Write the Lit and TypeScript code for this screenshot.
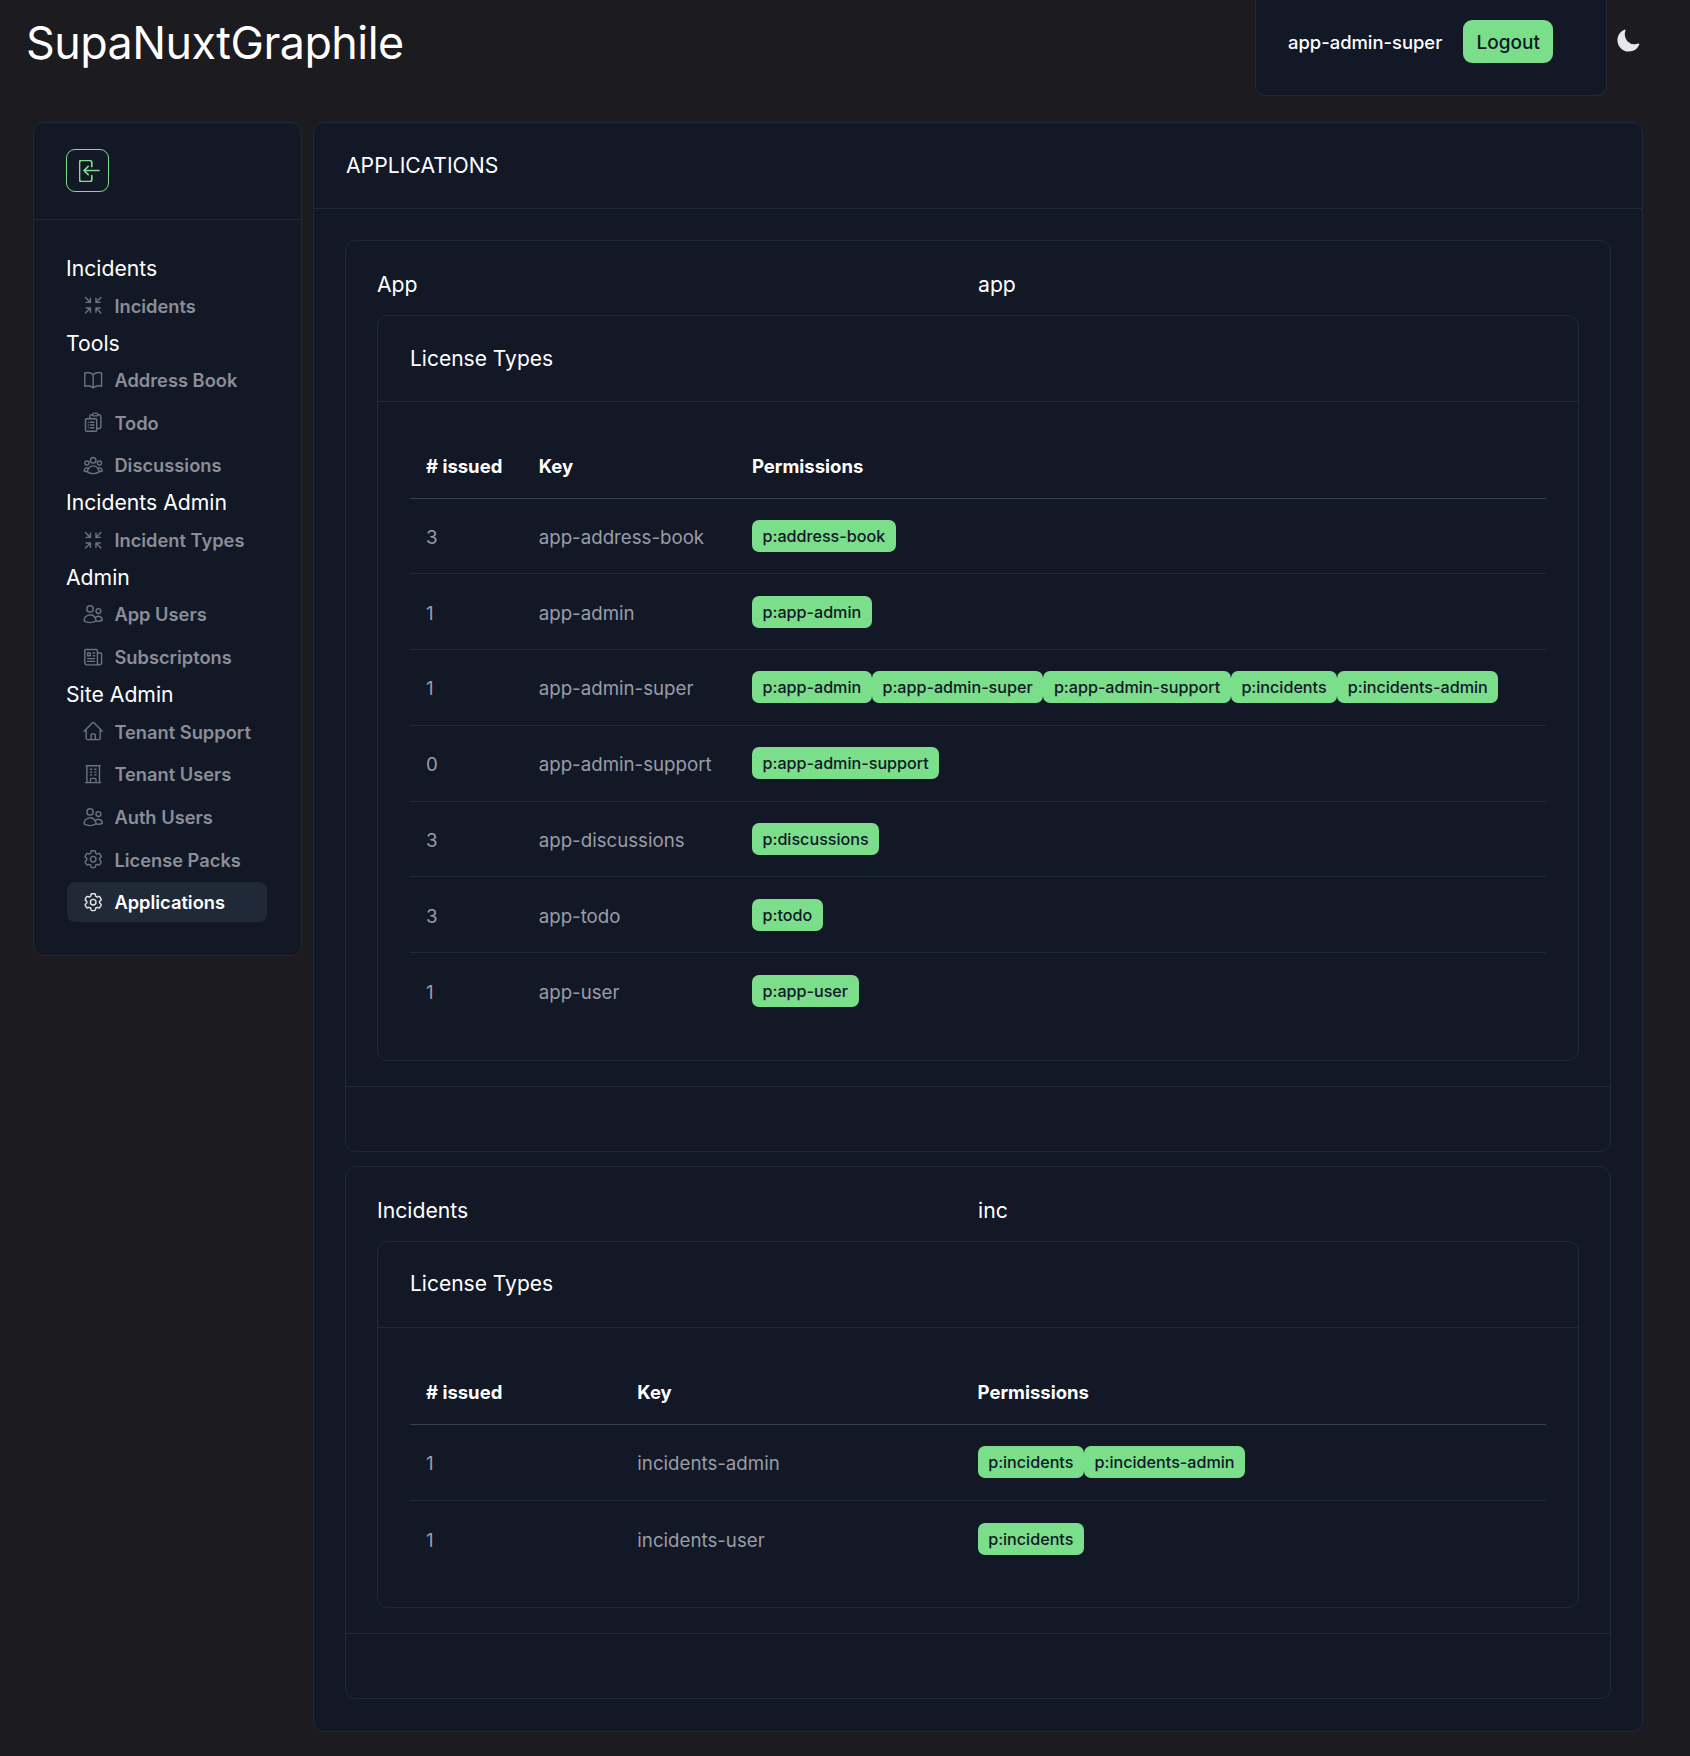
import { LitElement, css, html, svg } from 'lit';
import { customElement } from 'lit/decorators.js';

const ICONS: Record<string, string> = {
  in: 'M9 9V4.5M9 9H4.5M9 9 3.75 3.75M9 15v4.5M9 15H4.5M9 15l-5.25 5.25M15 9h4.5M15 9V4.5M15 9l5.25-5.25M15 15h4.5M15 15v4.5m0-4.5 5.25 5.25',
  book: 'M12 6.042A8.967 8.967 0 0 0 6 3.75c-1.052 0-2.062.18-3 .512v14.25A8.987 8.987 0 0 1 6 18c2.305 0 4.408.867 6 2.292m0-14.25a8.966 8.966 0 0 1 6-2.292c1.052 0 2.062.18 3 .512v14.25A8.987 8.987 0 0 0 18 18a8.967 8.967 0 0 0-6 2.292m0-14.25v14.25',
  clipboard: 'M9 12h3.75M9 15h3.75M9 18h3.75m3 .75H18a2.25 2.25 0 0 0 2.25-2.25V6.108c0-1.135-.845-2.098-1.976-2.192a48.424 48.424 0 0 0-1.123-.08m-5.801 0c-.065.21-.1.433-.1.664 0 .414.336.75.75.75h4.5a.75.75 0 0 0 .75-.75 2.25 2.25 0 0 0-.1-.664m-5.8 0A2.251 2.251 0 0 1 13.5 2.25H15c1.012 0 1.867.668 2.15 1.586m-5.8 0c-.376.023-.75.05-1.124.08C9.095 4.01 8.25 4.973 8.25 6.108V8.25m0 0H4.875c-.621 0-1.125.504-1.125 1.125v11.25c0 .621.504 1.125 1.125 1.125h9.75c.621 0 1.125-.504 1.125-1.125V9.375c0-.621-.504-1.125-1.125-1.125H8.25ZM6.75 12h.008v.008H6.75V12Zm0 3h.008v.008H6.75V15Zm0 3h.008v.008H6.75V18Z',
  group: 'M18 18.72a9.094 9.094 0 0 0 3.741-.479 3 3 0 0 0-4.682-2.72m.94 3.198.001.031c0 .225-.012.447-.037.666A11.944 11.944 0 0 1 12 21c-2.17 0-4.207-.576-5.963-1.584A6.062 6.062 0 0 1 6 18.719m12 0a5.971 5.971 0 0 0-.941-3.197m0 0A5.995 5.995 0 0 0 12 12.75a5.995 5.995 0 0 0-5.058 2.772m0 0a3 3 0 0 0-4.681 2.72 8.986 8.986 0 0 0 3.74.477m.94-3.197a5.971 5.971 0 0 0-.94 3.197M15 6.75a3 3 0 1 1-6 0 3 3 0 0 1 6 0Zm6 3a2.25 2.25 0 1 1-4.5 0 2.25 2.25 0 0 1 4.5 0Zm-13.5 0a2.25 2.25 0 1 1-4.5 0 2.25 2.25 0 0 1 4.5 0Z',
  users: 'M15 19.128a9.38 9.38 0 0 0 2.625.372 9.337 9.337 0 0 0 4.121-.952 4.125 4.125 0 0 0-7.533-2.493M15 19.128v-.003c0-1.113-.285-2.16-.786-3.07M15 19.128v.106A12.318 12.318 0 0 1 8.624 21c-2.331 0-4.512-.645-6.374-1.766l-.001-.109a6.375 6.375 0 0 1 11.964-3.07M12 6.375a3.375 3.375 0 1 1-6.75 0 3.375 3.375 0 0 1 6.75 0Zm8.25 2.25a2.625 2.625 0 1 1-5.25 0 2.625 2.625 0 0 1 5.25 0Z',
  news: 'M12 7.5h1.5m-1.5 3h1.5m-7.5 3h7.5m-7.5 3h7.5m3-9h3.375c.621 0 1.125.504 1.125 1.125V18a2.25 2.25 0 0 1-2.25 2.25M16.5 7.5V18a2.25 2.25 0 0 0 2.25 2.25M16.5 7.5V4.875c0-.621-.504-1.125-1.125-1.125H4.125C3.504 3.75 3 4.254 3 4.875V18a2.25 2.25 0 0 0 2.25 2.25h13.5M6 7.5h3v3H6v-3Z',
  home: 'm2.25 12 8.954-8.955c.44-.439 1.152-.439 1.591 0L21.75 12M4.5 9.75v10.125c0 .621.504 1.125 1.125 1.125H9.75v-4.875c0-.621.504-1.125 1.125-1.125h2.25c.621 0 1.125.504 1.125 1.125V21h4.125c.621 0 1.125-.504 1.125-1.125V9.75M8.25 21h8.25',
  office: 'M3.75 21h16.5M4.5 3h15M5.25 3v18m13.5-18v18M9 6.75h1.5m-1.5 3h1.5m-1.5 3h1.5m3-6H15m-1.5 3H15m-1.5 3H15M9 21v-3.375c0-.621.504-1.125 1.125-1.125h3.75c.621 0 1.125.504 1.125 1.125V21',
  cog: 'M9.594 3.94c.09-.542.56-.94 1.11-.94h2.593c.55 0 1.02.398 1.11.94l.213 1.281c.063.374.313.686.645.87.074.04.147.083.22.127.325.196.72.257 1.075.124l1.217-.456a1.125 1.125 0 0 1 1.37.49l1.296 2.247a1.125 1.125 0 0 1-.26 1.431l-1.003.827c-.293.241-.438.613-.43.992a7.723 7.723 0 0 1 0 .255c-.008.378.137.75.43.991l1.004.827c.424.35.534.955.26 1.43l-1.298 2.247a1.125 1.125 0 0 1-1.369.491l-1.217-.456c-.355-.133-.75-.072-1.076.124a6.47 6.47 0 0 1-.22.128c-.331.183-.581.495-.644.869l-.213 1.281c-.09.543-.56.94-1.11.94h-2.594c-.55 0-1.019-.398-1.11-.94l-.213-1.281c-.062-.374-.312-.686-.644-.87a6.52 6.52 0 0 1-.22-.127c-.325-.196-.72-.257-1.076-.124l-1.217.456a1.125 1.125 0 0 1-1.369-.49l-1.297-2.247a1.125 1.125 0 0 1 .26-1.431l1.004-.827c.292-.24.437-.613.43-.991a6.932 6.932 0 0 1 0-.255c.007-.38-.138-.751-.43-.992l-1.004-.827a1.125 1.125 0 0 1-.26-1.43l1.297-2.247a1.125 1.125 0 0 1 1.37-.491l1.216.456c.356.133.751.072 1.076-.124.072-.044.146-.086.22-.128.332-.183.582-.495.644-.869l.214-1.28ZM15 12a3 3 0 1 1-6 0 3 3 0 0 1 6 0Z',
};

const NAV = [
  { title: 'Incidents', items: [['Incidents', 'in']] },
  { title: 'Tools', items: [['Address Book', 'book'], ['Todo', 'clipboard'], ['Discussions', 'group']] },
  { title: 'Incidents Admin', items: [['Incident Types', 'in']] },
  { title: 'Admin', items: [['App Users', 'users'], ['Subscriptons', 'news']] },
  {
    title: 'Site Admin',
    items: [['Tenant Support', 'home'], ['Tenant Users', 'office'], ['Auth Users', 'users'], ['License Packs', 'cog'], ['Applications', 'cog']],
  },
];

const APPS = [
  {
    name: 'App',
    key: 'app',
    rows: [
      [3, 'app-address-book', ['p:address-book']],
      [1, 'app-admin', ['p:app-admin']],
      [1, 'app-admin-super', ['p:app-admin', 'p:app-admin-super', 'p:app-admin-support', 'p:incidents', 'p:incidents-admin']],
      [0, 'app-admin-support', ['p:app-admin-support']],
      [3, 'app-discussions', ['p:discussions']],
      [3, 'app-todo', ['p:todo']],
      [1, 'app-user', ['p:app-user']],
    ],
  },
  {
    name: 'Incidents',
    key: 'inc',
    rows: [
      [1, 'incidents-admin', ['p:incidents', 'p:incidents-admin']],
      [1, 'incidents-user', ['p:incidents']],
    ],
  },
];

const icon = (name: string) => html`
  <svg class="icon" viewBox="0 0 24 24" fill="none" stroke="currentColor" stroke-width="1.5" stroke-linecap="round" stroke-linejoin="round">
    ${svg`<path d=${ICONS[name]}></path>`}
  </svg>
`;

@customElement('app-root')
export class AppRoot extends LitElement {

  renderNav () {
    return NAV.map((group) => html`
      <div class="nav-group">
        <div class="nav-title">${group.title}</div>
        <ul>
          ${group.items.map(([label, name]) => html`
            <li class=${label === 'Applications' ? 'active' : ''}>${icon(name)}<span>${label}</span></li>
          `)}
        </ul>
      </div>
    `);
  }

  renderApp (app: any) {
    return html`
      <section class="card">
        <div class="card-body">
          <div class="app-title"><span>${app.name}</span><span>${app.key}</span></div>
          <div class="card inner">
            <div class="card-head">License Types</div>
            <div class="table-wrap">
              <table>
                <thead>
                  <tr><th># issued</th><th>Key</th><th>Permissions</th></tr>
                </thead>
                <tbody>
                  ${app.rows.map((row: any) => html`
                    <tr>
                      <td>${row[0]}</td>
                      <td>${row[1]}</td>
                      <td><div class="chips">${row[2].map((p: string) => html`<span class="chip">${p}</span>`)}</div></td>
                    </tr>
                  `)}
                </tbody>
              </table>
            </div>
          </div>
        </div>
        <div class="card-foot"></div>
      </section>
    `;
  }

  render () {
    return html`
      <header>
        <h1>SupaNuxtGraphile</h1>
        <div class="user">
          <span>app-admin-super</span>
          <button>Logout</button>
        </div>
        <svg class="moon" viewBox="0 0 24 24" fill="currentColor">
          <path fill-rule="evenodd" clip-rule="evenodd" d="M9.528 1.718a.75.75 0 0 1 .162.819A8.97 8.97 0 0 0 9 6a9 9 0 0 0 9 9 8.97 8.97 0 0 0 3.463-.69.75.75 0 0 1 .981.98 10.503 10.503 0 0 1-9.694 6.46c-5.799 0-10.5-4.701-10.5-10.5 0-4.368 2.667-8.112 6.46-9.694a.75.75 0 0 1 .818.162Z"></path>
        </svg>
      </header>
      <div class="layout">
        <aside class="card">
          <div class="side-head">
            <div class="logo">
              <svg viewBox="0 0 21 22" fill="none" stroke="currentColor" stroke-width="1.7" stroke-linecap="round" stroke-linejoin="round">
                <path d="M12.8 6.5V2.5a2 2 0 0 0-2-2H2.5a2 2 0 0 0-2 2v17a2 2 0 0 0 2 2h8.3a2 2 0 0 0 2-2v-4"></path>
                <path d="M20 10.5H5M9.2 6.3 5 10.5l4.2 4.2"></path>
              </svg>
            </div>
          </div>
          <nav>${this.renderNav()}</nav>
        </aside>
        <main class="card">
          <div class="main-head">APPLICATIONS</div>
          <div class="main-body">${APPS.map((app) => this.renderApp(app))}</div>
        </main>
      </div>
    `;
  }

  static styles = css`
    :host {
      display: block;
      min-height: 1756px;
      background: #1c1b1f;
      color: #fff;
      font-family: Inter, "Noto Sans", sans-serif;
      box-sizing: border-box;
    }

    * {
      box-sizing: border-box;
    }

    header {
      display: flex;
      align-items: flex-start;
      height: 96px;
      padding-left: 26px;
    }

    h1 {
      margin: 0;
      flex: 1;
      font-size: 44.8px;
      line-height: 86px;
      font-weight: 400;
      letter-spacing: -0.5px;
    }

    .user {
      width: 352px;
      height: 96px;
      display: flex;
      align-items: flex-start;
      gap: 21px;
      padding: 20px 0 0 32px;
      background: #121826;
      border: 1px solid #1f2937;
      border-top: 0;
      border-radius: 0 0 11px 11px;
      font-size: 18.4px;
      font-weight: 500;
      line-height: 45px;
    }

    button {
      width: 90px;
      height: 43px;
      border: 0;
      border-radius: 9px;
      background: #7ade8a;
      color: #111827;
      font: 500 19px Inter, sans-serif;
      padding: 2px 0 0;
    }

    .moon {
      width: 26px;
      height: 26px;
      margin: 28px 49px 0 8px;
      color: #e5e7eb;
    }

    .layout {
      display: flex;
      align-items: flex-start;
      gap: 11px;
      margin-top: 26px;
      padding: 0 47px 0 33px;
    }

    .card {
      background: #121826;
      border: 1px solid #1f2937;
      border-radius: 11px;
    }

    aside {
      flex: 0 0 269px;
    }

    .side-head {
      height: 97px;
      padding: 26px 32px;
      border-bottom: 1px solid #1f2937;
    }

    .logo {
      width: 43px;
      height: 43px;
      display: flex;
      align-items: center;
      justify-content: center;
      border: 1px solid #7ade8a;
      border-radius: 9px;
      color: #7ade8a;
      padding-left: 4px;
    }

    .logo svg {
      width: 21px;
      height: 22px;
    }

    nav {
      display: flex;
      flex-direction: column;
      gap: 3px;
      padding: 34px 34px 33px 32px;
    }

    .nav-title {
      height: 28px;
      font-size: 21.2px;
      line-height: 28px;
      font-weight: 400;
    }

    ul {
      list-style: none;
      margin: 3.5px 0 0 1px;
      padding: 0;
      display: flex;
      flex-direction: column;
      gap: 2.7px;
    }

    li {
      height: 40px;
      display: flex;
      align-items: center;
      gap: 10px;
      padding-left: 15px;
      border-radius: 8px;
      color: #8b8d98;
      font-size: 18.3px;
      font-weight: 600;
    }

    li.active {
      background: #1f2937;
      color: #fff;
    }

    .icon {
      width: 22.4px;
      height: 22.4px;
      flex: none;
      color: #6b7280;
    }

    li.active .icon {
      color: #e5e7eb;
    }

    main {
      flex: 1;
      min-width: 0;
      height: 1610px;
    }

    .main-head {
      height: 86px;
      padding: 0 32px 2px;
      display: flex;
      align-items: center;
      border-bottom: 1px solid #1f2937;
      font-size: 21.2px;
      font-weight: 400;
    }

    .main-body {
      display: flex;
      flex-direction: column;
      gap: 14px;
      padding: 31px 31px;
    }

    .card-body {
      padding: 28px 31px 25px;
    }

    .app-title {
      display: grid;
      grid-template-columns: 1fr 1fr;
      height: 30px;
      margin-bottom: 16px;
      font-size: 21.2px;
      line-height: 30px;
    }

    .card-foot {
      height: 65px;
      border-top: 1px solid #1f2937;
    }

    .card-head {
      height: 86px;
      padding: 0 32px 1px;
      display: flex;
      align-items: center;
      border-bottom: 1px solid #1f2937;
      font-size: 21px;
    }

    .table-wrap {
      padding: 32px 32px 31px;
    }

    section + section .table-wrap {
      padding: 33px 32px 31px;
    }

    table {
      width: 100%;
      border-collapse: collapse;
    }

    th {
      height: 64px;
      padding: 0 16px;
      text-align: left;
      font-size: 18.5px;
      font-weight: 700;
      color: #fff;
      border-bottom: 1px solid #374151;
    }

    td {
      height: 75.8px;
      padding: 3px 16px 0;
      font-size: 18.7px;
      color: #9a9ca8;
      border-bottom: 1px solid #1f2937;
      white-space: nowrap;
    }

    tbody tr:last-child td {
      border-bottom: 0;
    }

    .chips {
      display: flex;
      margin-top: -3px;
    }

    .chip {
      height: 32px;
      padding: 0 10.6px;
      border-radius: 7px;
      background: #7ade8a;
      color: #111827;
      font-size: 16.15px;
      font-weight: 500;
      line-height: 32px;
    }
  `;
}
